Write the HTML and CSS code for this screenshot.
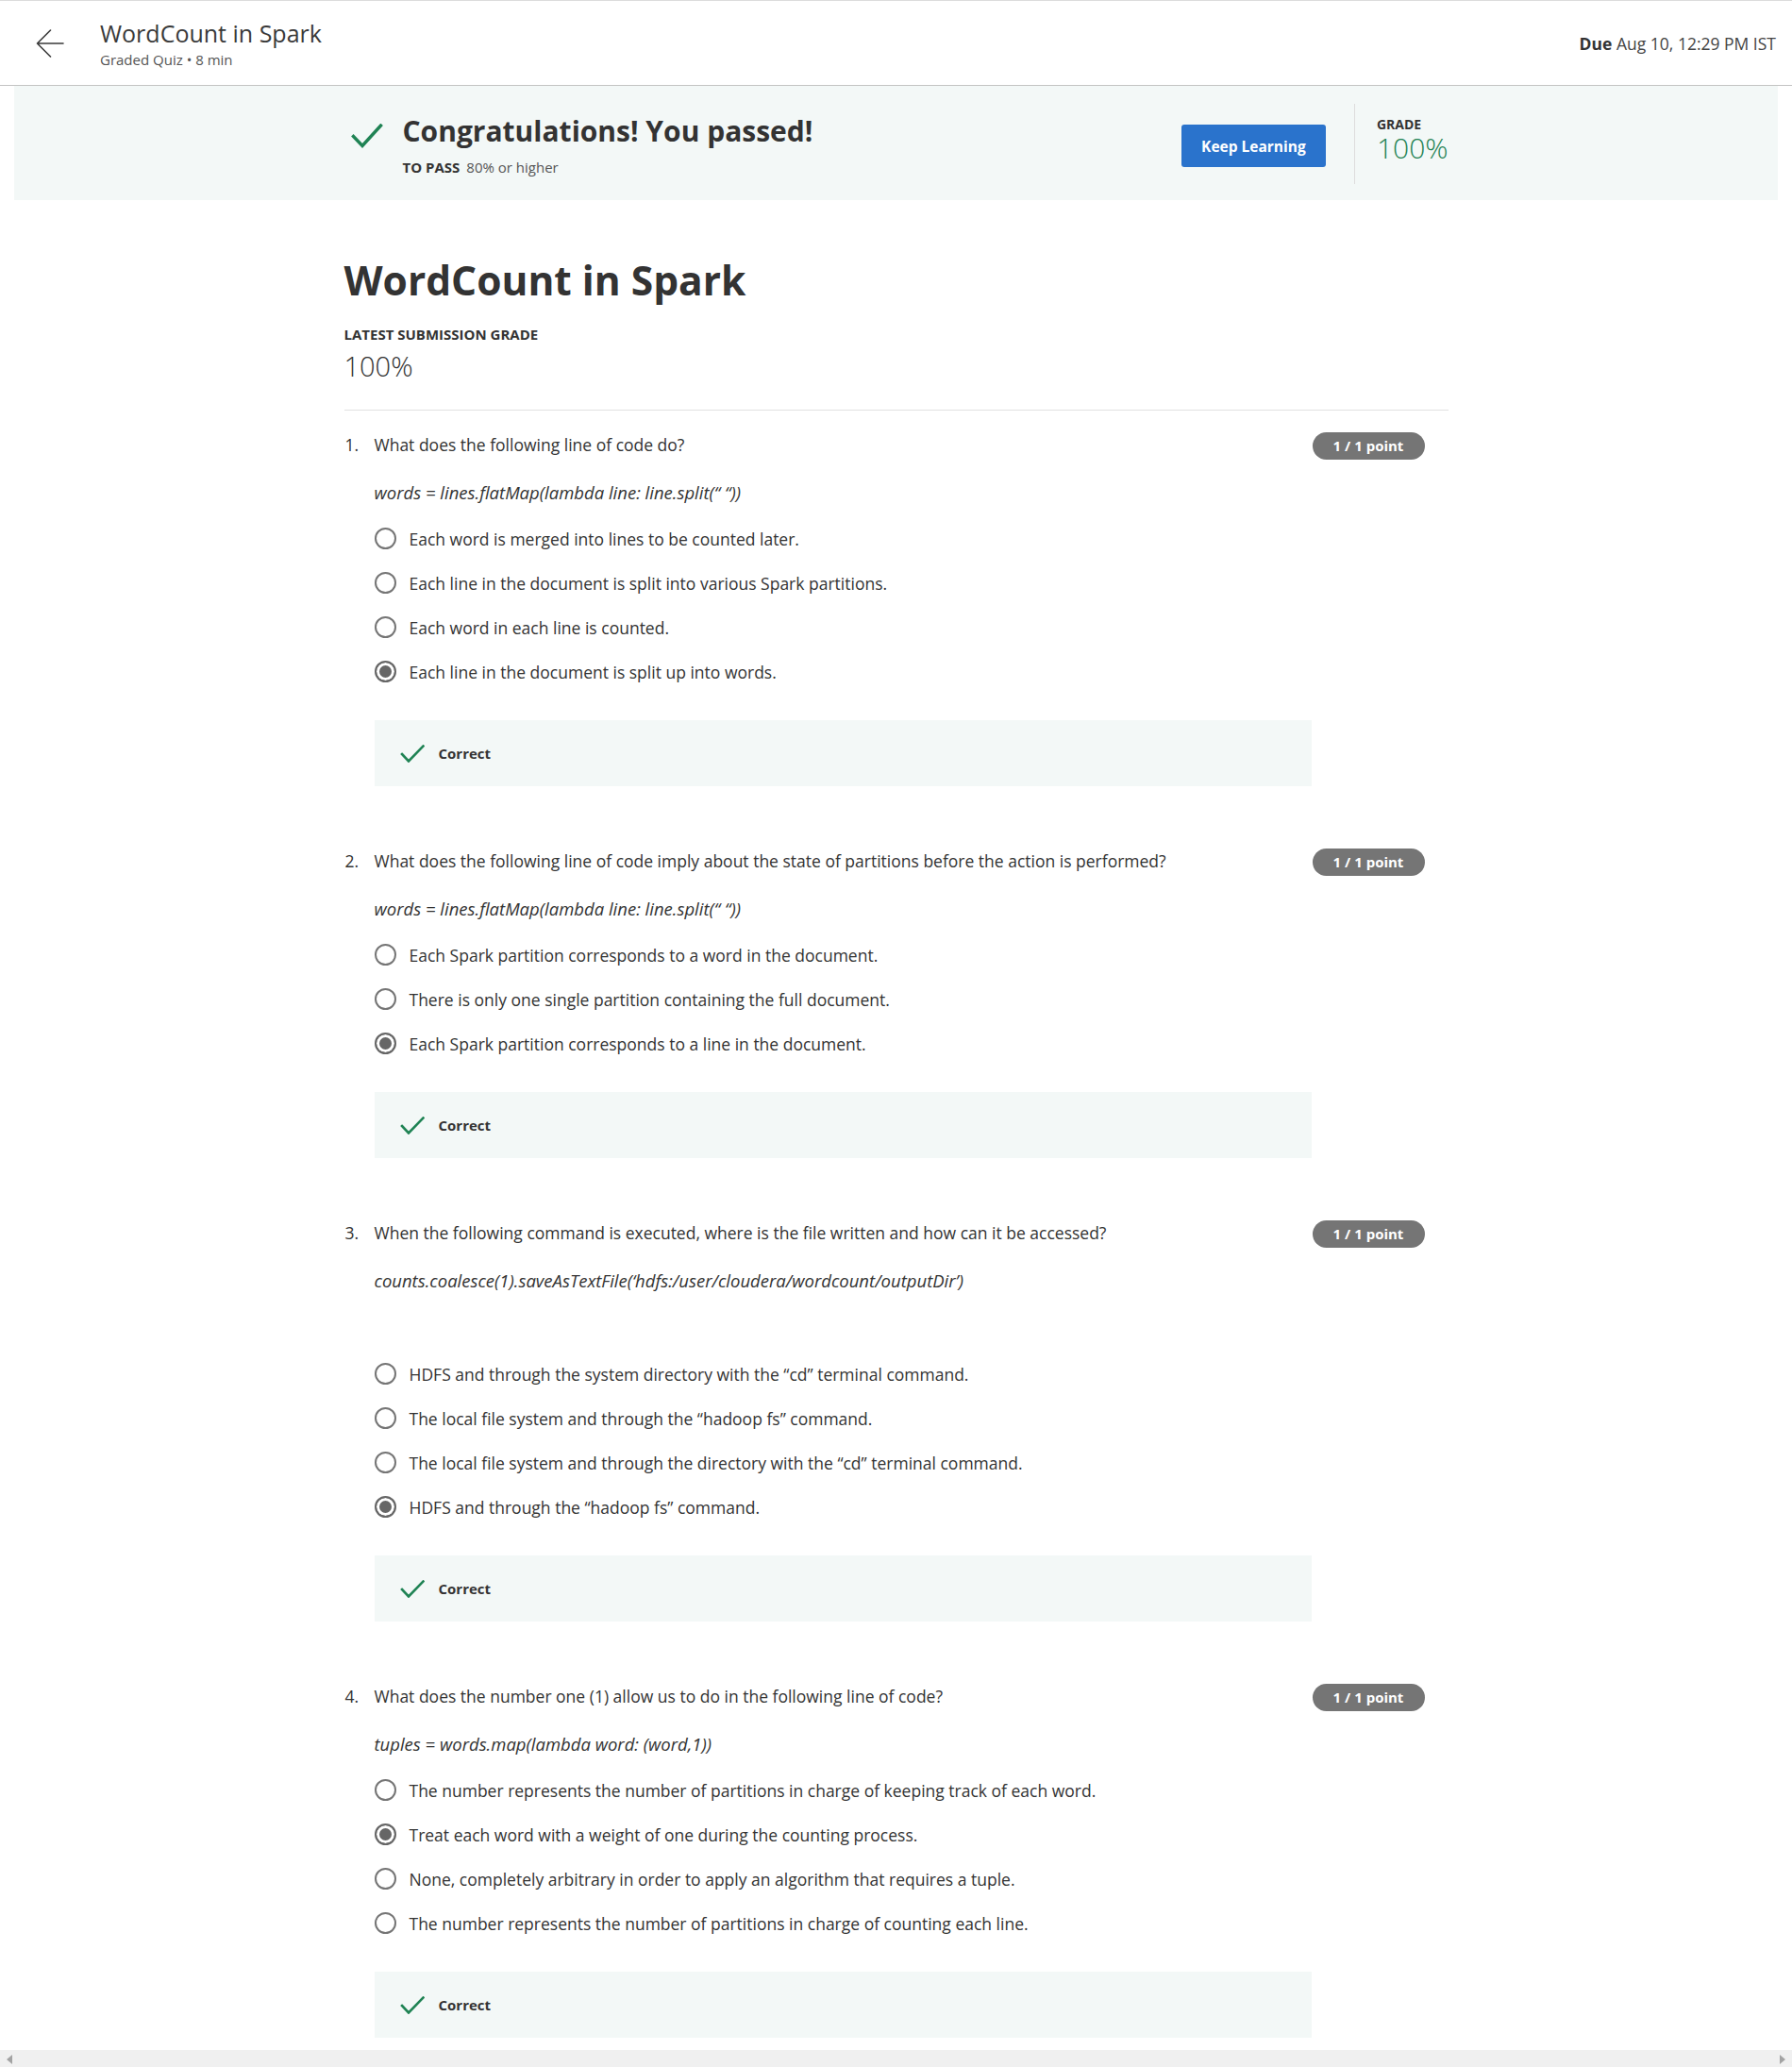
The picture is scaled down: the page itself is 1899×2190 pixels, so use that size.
FILE: index.html
```html
<!DOCTYPE html>
<html lang="en">
<head>
<meta charset="utf-8">
<title>WordCount in Spark</title>
<link rel="stylesheet" href="styles.css">
</head>
<body>
<header class="topbar">
  <a class="back" href="#" aria-label="Back">
    <svg width="30" height="30" viewBox="0 0 30 30" fill="none" stroke="#3a3a3a" stroke-width="1.6" stroke-linecap="round" stroke-linejoin="round"><path d="M29 15H1.5M15.5 1L1.5 15l14 14"/></svg>
  </a>
  <div class="item-title">
    <div class="item-name">WordCount in Spark</div>
    <div class="item-meta">Graded Quiz • 8 min</div>
  </div>
  <div class="due"><strong>Due</strong> Aug 10, 12:29 PM IST</div>
</header>

<section class="banner">
  <div class="banner-inner">
    <svg class="pass-check" width="34" height="26" viewBox="0 0 34 26" fill="none" stroke="#1f8354" stroke-width="3.4" stroke-linecap="square"><path d="M2.5 13.5l9.5 10L31.5 2"/></svg>
    <div class="pass-text">
      <h2 class="pass-title">Congratulations! You passed!</h2>
      <div class="to-pass"><strong>TO PASS</strong><span>80% or higher</span></div>
    </div>
    <button class="keep">Keep Learning</button>
    <div class="vdivider"></div>
    <div class="grade">
      <div class="grade-label">GRADE</div>
      <div class="grade-value">100%</div>
    </div>
  </div>
</section>

<main class="content">
  <h1 class="page-title">WordCount in Spark</h1>
  <div class="latest-label">LATEST SUBMISSION GRADE</div>
  <div class="latest-value">100%</div>
  <hr class="rule">

  <ol class="questions">
    <li class="question">
      <div class="q-head">
        <span class="q-num">1.</span>
        <div class="q-text">What does the following line of code do?</div>
        <span class="badge">1 / 1 point</span>
      </div>
      <div class="q-body">
        <p class="code">words = lines.flatMap(lambda line: line.split(“ “))</p>
        <ul class="options">
          <li class="option"><span class="radio"></span>Each word is merged into lines to be counted later.</li>
          <li class="option"><span class="radio"></span>Each line in the document is split into various Spark partitions.</li>
          <li class="option"><span class="radio"></span>Each word in each line is counted.</li>
          <li class="option"><span class="radio checked"></span>Each line in the document is split up into words.</li>
        </ul>
        <div class="feedback">
          <svg width="26" height="19" viewBox="0 0 26 19" fill="none" stroke="#1f8354" stroke-width="2.6" stroke-linecap="square"><path d="M2 10l7 7.5L24.5 1.5"/></svg>
          <span>Correct</span>
        </div>
      </div>
    </li>

    <li class="question">
      <div class="q-head">
        <span class="q-num">2.</span>
        <div class="q-text">What does the following line of code imply about the state of partitions before the action is performed?</div>
        <span class="badge">1 / 1 point</span>
      </div>
      <div class="q-body">
        <p class="code">words = lines.flatMap(lambda line: line.split(“ “))</p>
        <ul class="options">
          <li class="option"><span class="radio"></span>Each Spark partition corresponds to a word in the document.</li>
          <li class="option"><span class="radio"></span>There is only one single partition containing the full document.</li>
          <li class="option"><span class="radio checked"></span>Each Spark partition corresponds to a line in the document.</li>
        </ul>
        <div class="feedback">
          <svg width="26" height="19" viewBox="0 0 26 19" fill="none" stroke="#1f8354" stroke-width="2.6" stroke-linecap="square"><path d="M2 10l7 7.5L24.5 1.5"/></svg>
          <span>Correct</span>
        </div>
      </div>
    </li>

    <li class="question">
      <div class="q-head">
        <span class="q-num">3.</span>
        <div class="q-text">When the following command is executed, where is the file written and how can it be accessed?</div>
        <span class="badge">1 / 1 point</span>
      </div>
      <div class="q-body">
        <p class="code">counts.coalesce(1).saveAsTextFile(‘hdfs:/user/cloudera/wordcount/outputDir’)</p>
        <ul class="options spaced">
          <li class="option"><span class="radio"></span>HDFS and through the system directory with the “cd” terminal command.</li>
          <li class="option"><span class="radio"></span>The local file system and through the “hadoop fs” command.</li>
          <li class="option"><span class="radio"></span>The local file system and through the directory with the “cd” terminal command.</li>
          <li class="option"><span class="radio checked"></span>HDFS and through the “hadoop fs” command.</li>
        </ul>
        <div class="feedback">
          <svg width="26" height="19" viewBox="0 0 26 19" fill="none" stroke="#1f8354" stroke-width="2.6" stroke-linecap="square"><path d="M2 10l7 7.5L24.5 1.5"/></svg>
          <span>Correct</span>
        </div>
      </div>
    </li>

    <li class="question">
      <div class="q-head">
        <span class="q-num">4.</span>
        <div class="q-text">What does the number one (1) allow us to do in the following line of code?</div>
        <span class="badge">1 / 1 point</span>
      </div>
      <div class="q-body">
        <p class="code">tuples = words.map(lambda word: (word,1))</p>
        <ul class="options">
          <li class="option"><span class="radio"></span>The number represents the number of partitions in charge of keeping track of each word.</li>
          <li class="option"><span class="radio checked"></span>Treat each word with a weight of one during the counting process.</li>
          <li class="option"><span class="radio"></span>None, completely arbitrary in order to apply an algorithm that requires a tuple.</li>
          <li class="option"><span class="radio"></span>The number represents the number of partitions in charge of counting each line.</li>
        </ul>
        <div class="feedback">
          <svg width="26" height="19" viewBox="0 0 26 19" fill="none" stroke="#1f8354" stroke-width="2.6" stroke-linecap="square"><path d="M2 10l7 7.5L24.5 1.5"/></svg>
          <span>Correct</span>
        </div>
      </div>
    </li>
  </ol>
</main>

<div class="hscroll" aria-hidden="true">
  <span class="arrow arrow-left"></span>
  <span class="arrow arrow-right"></span>
</div>
</body>
</html>
```

FILE: styles.css
```css
html {
  overflow: hidden;
}

body {
  margin: 0;
  background: #ffffff;
  color: #333333;
  font-family: "Open Sans", "Liberation Sans", Arial, sans-serif;
}

/* ---------- top bar ---------- */
.topbar {
  display: flex;
  align-items: center;
  height: 89px;
  padding: 0 17px 0 38px;
  border-top: 1px solid #dcdcdc;
  border-bottom: 1px solid #c4c4c4;
}

.back {
  display: flex;
  width: 30px;
  height: 30px;
  margin-right: 38px;
}

.item-name {
  font-size: 25px;
  line-height: 32px;
  color: #3a3a3a;
}

.item-meta {
  margin-top: 2px;
  font-size: 15px;
  line-height: 20px;
  color: #555555;
}

.due {
  margin-left: auto;
  font-size: 17.5px;
  line-height: 24px;
  color: #444444;
}

.due strong {
  font-weight: 700;
  color: #333333;
}

/* ---------- pass banner ---------- */
.banner {
  margin: 0 15px;
  height: 121px;
  background: #f3f8f7;
}

.banner-inner {
  display: flex;
  align-items: flex-start;
  width: 1170px;
  margin: 0 auto;
}

.pass-check {
  flex: none;
  margin: 40px 21px 0 7px;
}

.pass-text {
  margin-top: 28px;
}

.pass-title {
  margin: 0;
  font-size: 30px;
  line-height: 40px;
  font-weight: 700;
  color: #333333;
}

.to-pass {
  margin-top: 8px;
  font-size: 15px;
  line-height: 20px;
  color: #555555;
}

.to-pass strong {
  margin-right: 7px;
  font-weight: 700;
  color: #333333;
}

.keep {
  flex: none;
  width: 153px;
  height: 45px;
  margin: 41px 0 0 auto;
  border: 0;
  border-radius: 3px;
  background: #2a73cc;
  color: #ffffff;
  font-family: inherit;
  font-size: 15.5px;
  font-weight: 700;
}

.vdivider {
  flex: none;
  width: 1px;
  height: 85px;
  margin: 19px 23px 0 30px;
  background: #dddddd;
}

.grade {
  margin-top: 32px;
}

.grade-label {
  font-size: 14px;
  line-height: 18px;
  font-weight: 700;
  color: #333333;
}

.grade-value {
  font-size: 30px;
  line-height: 32px;
  font-weight: 300;
  color: #1f8354;
}

/* ---------- main content ---------- */
.content {
  width: 1170px;
  margin: 0 auto;
}

.page-title {
  margin: 57px 0 0;
  font-size: 42.5px;
  line-height: 56px;
  font-weight: 700;
  color: #333333;
}

.latest-label {
  margin-top: 19px;
  font-size: 15px;
  line-height: 20px;
  font-weight: 700;
  color: #333333;
}

.latest-value {
  margin-top: 6px;
  font-size: 29px;
  line-height: 36px;
  font-weight: 300;
  color: #333333;
}

.rule {
  margin: 28px 0 0;
  border: 0;
  border-top: 1px solid #e1e1e1;
}

.questions {
  margin: 0;
  padding: 23px 0 0;
  list-style: none;
}

.question + .question {
  margin-top: 66px;
}

.q-head {
  display: flex;
  align-items: flex-start;
  font-size: 17.5px;
  line-height: 26px;
}

.q-num {
  flex: none;
  width: 31px;
  padding-left: 1px;
}

.q-text {
  flex: 1;
}

.badge {
  flex: none;
  width: 119px;
  height: 29px;
  margin: 0 25px 0 20px;
  border-radius: 15px;
  background: #757575;
  color: #ffffff;
  font-size: 15px;
  line-height: 29px;
  font-weight: 700;
  text-align: center;
}

.q-body {
  padding: 0 145px 0 32px;
}

.code {
  margin: 22px 0 0;
  font-size: 18.5px;
  line-height: 26px;
  font-style: italic;
}

.options {
  margin: 12px 0 0;
  padding: 0;
  list-style: none;
}

.options.spaced {
  margin-top: 62px;
}

.option {
  display: flex;
  align-items: center;
  height: 47px;
  font-size: 17.5px;
}

.radio {
  flex: none;
  box-sizing: border-box;
  width: 23px;
  height: 23px;
  margin-right: 14px;
  border: 2px solid #757575;
  border-radius: 50%;
}

.radio.checked {
  border-color: #666666;
  background: #666666;
  box-shadow: inset 0 0 0 3px #ffffff;
}

.feedback {
  display: flex;
  align-items: center;
  height: 70px;
  margin-top: 28px;
  padding-left: 27px;
  background: #f3f8f7;
  font-size: 15px;
  font-weight: 700;
  color: #333333;
}

.feedback svg {
  flex: none;
  margin-right: 15px;
}

/* ---------- horizontal scrollbar strip ---------- */
.hscroll {
  position: fixed;
  left: 0;
  right: 0;
  bottom: 0;
  height: 18px;
  background: #f0f0f0;
}

.arrow {
  position: absolute;
  top: 5px;
  width: 0;
  height: 0;
  border-top: 5px solid transparent;
  border-bottom: 5px solid transparent;
}

.arrow-left {
  left: 7px;
  border-right: 6px solid #a3a3a3;
}

.arrow-right {
  left: 1886px;
  border-left: 6px solid #a3a3a3;
}
```
